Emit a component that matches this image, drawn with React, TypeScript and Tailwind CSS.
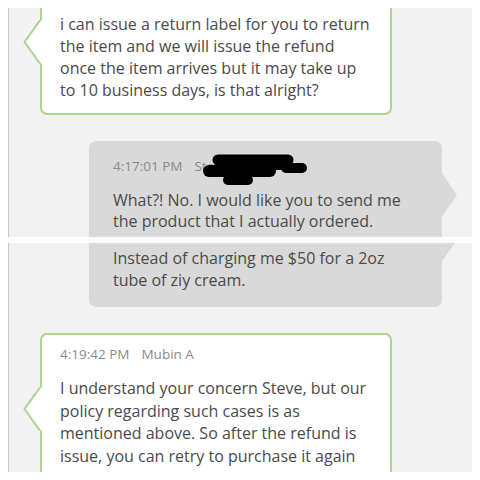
import React from "react";

const GREEN = "#abd38f";

function GreenTail({ top }: { top: number }) {
  return (
    <svg
      className="absolute left-[-19px]"
      style={{ top }}
      width="21"
      height="44"
      viewBox="0 0 21 44"
    >
      <rect x="16" y="0" width="5" height="44" fill="#ffffff" />
      <polygon points="18,0 1.5,22 18,44" fill="#ffffff" />
      <polyline points="18,-1 1.5,22 18,45" fill="none" stroke={GREEN} strokeWidth="2" strokeLinejoin="round" />
    </svg>
  );
}

function GrayTail({ top }: { top: number }) {
  return (
    <svg className="absolute right-[-16px]" style={{ top }} width="17" height="46" viewBox="0 0 17 46">
      <polygon points="0,0 16,23 0,46" fill="#d9d9d9" />
    </svg>
  );
}

function Line({ children }: { children: React.ReactNode }) {
  return <span className="block whitespace-nowrap">{children}</span>;
}

export default function App() {
  return (
    <div className="w-[480px] h-[480px] bg-white pt-[8px] flex flex-col font-['Open_Sans','Noto_Sans',sans-serif] text-[#4a4a4a]">
      {/* top screenshot */}
      <div className="relative ml-[8px] w-[464px] h-[229px] shrink-0 overflow-hidden bg-[#f2f2f2] border-l border-[#c9c9c9]">
        <div className="relative ml-[31px] -mt-[17px] w-[352px] bg-white border-2 border-[#abd38f] rounded-[7px] pl-[18px] pt-[20px] pb-[12px] text-[16px] leading-[22px]">
          <GreenTail top={27} />
          <Line>i can issue a return label for you to return</Line>
          <Line>the item and we will issue the refund</Line>
          <Line>once the item arrives but it may take up</Line>
          <Line>to 10 business days, is that alright?</Line>
        </div>

        <div className="relative ml-[80px] mt-[26px] w-[353px] bg-[#d9d9d9] rounded-[7px] pl-[24px] pt-[16px] pb-[16px]">
          <GrayTail top={31} />
          <div className="flex gap-[12px] text-[13.5px] leading-[18px] text-[#8a8a8a]">
            <span>4:17:01 PM</span>
            <span>Steve</span>
          </div>
          <svg className="absolute left-[111px] top-[9px]" width="110" height="40" viewBox="0 0 110 40">
            <g stroke="#000" strokeLinecap="round" fill="none">
              <line x1="18" y1="10" x2="88" y2="10" strokeWidth="11" />
              <line x1="86" y1="18" x2="102" y2="18" strokeWidth="10" />
              <line x1="9" y1="21" x2="70" y2="21" strokeWidth="12" />
              <line x1="28" y1="30" x2="48" y2="30" strokeWidth="10" />
              <line x1="30" y1="15" x2="80" y2="15" strokeWidth="10" />
            </g>
          </svg>
          <div className="mt-[15px] text-[16px] leading-[21px]">
            <Line>What?! No. I would like you to send me</Line>
            <Line>the product that I actually ordered.</Line>
            <Line>&nbsp;</Line>
          </div>
        </div>
      </div>

      {/* gap between screenshots */}
      <div className="h-[6px] shrink-0 bg-white" />

      {/* bottom screenshot */}
      <div className="relative ml-[8px] w-[464px] h-[229px] shrink-0 overflow-hidden bg-[#f2f2f2] border-l border-[#c9c9c9]">
        <div className="relative ml-[80px] -mt-[30px] w-[353px] bg-[#d9d9d9] rounded-[7px] pl-[24px] pt-[34px] pb-[16px] text-[16px] leading-[22px]">
          <GrayTail top={4} />
          <Line>Instead of charging me $50 for a 2oz</Line>
          <Line>tube of ziy cream.</Line>
        </div>

        <div className="relative ml-[31px] mt-[26px] w-[352px] bg-white border-2 border-[#abd38f] rounded-[7px] pl-[18px] pt-[10px] pb-[20px]">
          <GreenTail top={52} />
          <div className="flex gap-[12px] text-[13.5px] leading-[18px] text-[#8a8a8a]">
            <span>4:19:42 PM</span>
            <span>Mubin A</span>
          </div>
          <div className="mt-[14px] text-[16px] leading-[22.5px]">
            <Line>I understand your concern Steve, but our</Line>
            <Line>policy regarding such cases is as</Line>
            <Line>mentioned above. So after the refund is</Line>
            <Line>issue, you can retry to purchase it again</Line>
            <Line>&nbsp;</Line>
          </div>
        </div>
      </div>
    </div>
  );
}
